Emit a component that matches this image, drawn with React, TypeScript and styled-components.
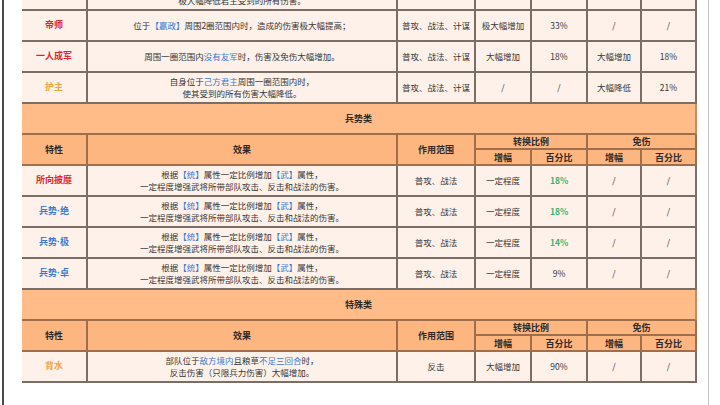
import React from 'react';
import styled, { createGlobalStyle } from 'styled-components';

type Tone = 'red' | 'orange' | 'blue';

const toneColor: Record<Tone, string> = {
  red: '#e0262c',
  orange: '#f3a43e',
  blue: '#3a7ad6',
};

const GlobalStyle = createGlobalStyle`
  html, body {
    margin: 0;
    padding: 0;
    background: #ffffff;
  }

  body {
    font-family: "Noto Sans CJK SC", "Noto Sans", sans-serif;
    color: #363636;
  }
`;

const Screen = styled.div`
  box-sizing: border-box;
  width: 720px;
  height: 405px;
  padding-left: 2px;
  overflow: hidden;
  background: #ffffff;
`;

const Frame = styled.div`
  box-sizing: border-box;
  width: 707px;
  height: 405px;
  padding-left: 18px;
  border-left: 2px solid #4b4b4b;
  border-right: 1px solid #c6c6c6;
  overflow: hidden;
`;

const Table = styled.table`
  width: 675px;
  margin-top: -20px;
  table-layout: fixed;
  border-collapse: separate;
  border-spacing: 0;
`;

const Col = styled.col<{ $w: number }>`
  width: ${(p) => p.$w}px;
`;

const Row = styled.tr<{ $h: number }>`
  height: ${(p) => p.$h}px;
`;

const Cell = styled.td`
  box-sizing: border-box;
  padding: 0 2px;
  background: #fdf1ea;
  border-right: 2px solid #7b6e67;
  border-bottom: 2px solid #7b6e67;
  text-align: center;
  vertical-align: middle;
  font-size: 8.5px;
  line-height: 11.5px;
  white-space: nowrap;
`;

const HeadCell = styled.th`
  box-sizing: border-box;
  padding: 0;
  background: #fdb680;
  border-right: 2px solid #a06e4b;
  border-bottom: 2px solid #a06e4b;
  text-align: center;
  vertical-align: middle;
  font-size: 9px;
  line-height: 11px;
  font-weight: 700;
  color: #2e2a27;
`;

const SectionCell = styled.td`
  box-sizing: border-box;
  background: #ffbc88;
  border-right: 2px solid #c98a5c;
  border-bottom: 2px solid #a06e4b;
  text-align: center;
  vertical-align: middle;
  font-size: 9px;
  font-weight: 700;
  color: #2e2a27;
`;

// Latin font first so the middle dot in 兵势·绝 stays narrow
const Name = styled.span<{ $tone: Tone }>`
  font-family: "Liberation Sans", "Noto Sans CJK SC", sans-serif;
  font-size: 9px;
  font-weight: 700;
  color: ${(p) => toneColor[p.$tone]};
`;

const Mark = styled.span`
  color: #3a7ad6;
`;

const Pct = styled.span<{ $green?: boolean }>`
  color: ${(p) => (p.$green ? '#37b36f' : 'inherit')};
  font-weight: ${(p) => (p.$green ? 700 : 400)};
`;

type Trait = {
  name: string;
  tone: Tone;
  effect: React.ReactNode;
  range: string;
  boost: string;
  pct: string;
  green?: boolean;
  guard: string;
  guardPct: string;
};

const widths = [66, 310, 78, 56, 56, 54, 55];

const troopEffect = (
  <>
    根据<Mark>【统】</Mark>属性一定比例增加<Mark>【武】</Mark>属性，
    <br />
    一定程度增强武将所带部队攻击、反击和战法的伤害。
  </>
);

const lordTraits: Trait[] = [
  {
    name: '忠君',
    tone: 'orange',
    effect: (
      <>
        周围一圈范围内存在己方君主时，
        <br />
        极大幅降低君主受到的所有伤害。
      </>
    ),
    range: '普攻、战法、计谋',
    boost: '/',
    pct: '/',
    guard: '极大幅降低',
    guardPct: '30%',
  },
  {
    name: '帝师',
    tone: 'red',
    effect: (
      <>
        位于<Mark>【嬴政】</Mark>周围2圈范围内时，造成的伤害极大幅提高；
      </>
    ),
    range: '普攻、战法、计谋',
    boost: '极大幅增加',
    pct: '33%',
    guard: '/',
    guardPct: '/',
  },
  {
    name: '一人成军',
    tone: 'red',
    effect: (
      <>
        周围一圈范围内<Mark>没有友军</Mark>时，伤害及免伤大幅增加。
      </>
    ),
    range: '普攻、战法、计谋',
    boost: '大幅增加',
    pct: '18%',
    guard: '大幅增加',
    guardPct: '18%',
  },
  {
    name: '护主',
    tone: 'orange',
    effect: (
      <>
        自身位于<Mark>己方君主</Mark>周围一圈范围内时，
        <br />
        使其受到的所有伤害大幅降低。
      </>
    ),
    range: '普攻、战法、计谋',
    boost: '/',
    pct: '/',
    guard: '大幅降低',
    guardPct: '21%',
  },
];

const troopTraits: Trait[] = [
  { name: '所向披靡', tone: 'red', effect: troopEffect, range: '普攻、战法', boost: '一定程度', pct: '18%', green: true, guard: '/', guardPct: '/' },
  { name: '兵势·绝', tone: 'blue', effect: troopEffect, range: '普攻、战法', boost: '一定程度', pct: '18%', green: true, guard: '/', guardPct: '/' },
  { name: '兵势·极', tone: 'blue', effect: troopEffect, range: '普攻、战法', boost: '一定程度', pct: '14%', green: true, guard: '/', guardPct: '/' },
  { name: '兵势·卓', tone: 'blue', effect: troopEffect, range: '普攻、战法', boost: '一定程度', pct: '9%', guard: '/', guardPct: '/' },
];

const specialTraits: Trait[] = [
  {
    name: '背水',
    tone: 'orange',
    effect: (
      <>
        部队位于<Mark>敌方境内</Mark>且粮草<Mark>不足三回合</Mark>时，
        <br />
        反击伤害（只限兵力伤害）大幅增加。
      </>
    ),
    range: '反击',
    boost: '大幅增加',
    pct: '90%',
    guard: '/',
    guardPct: '/',
  },
];

const TraitRow: React.FC<{ trait: Trait }> = ({ trait }) => (
  <Row $h={31}>
    <Cell>
      <Name $tone={trait.tone}>{trait.name}</Name>
    </Cell>
    <Cell>{trait.effect}</Cell>
    <Cell>{trait.range}</Cell>
    <Cell>{trait.boost}</Cell>
    <Cell>
      <Pct $green={trait.green}>{trait.pct}</Pct>
    </Cell>
    <Cell>{trait.guard}</Cell>
    <Cell>{trait.guardPct}</Cell>
  </Row>
);

const SectionHead: React.FC<{ title: string }> = ({ title }) => (
  <>
    <Row $h={31}>
      <SectionCell colSpan={7}>{title}</SectionCell>
    </Row>
    <Row $h={15}>
      <HeadCell rowSpan={2}>特性</HeadCell>
      <HeadCell rowSpan={2}>效果</HeadCell>
      <HeadCell rowSpan={2}>作用范围</HeadCell>
      <HeadCell colSpan={2}>转换比例</HeadCell>
      <HeadCell colSpan={2}>免伤</HeadCell>
    </Row>
    <Row $h={16}>
      <HeadCell>增幅</HeadCell>
      <HeadCell>百分比</HeadCell>
      <HeadCell>增幅</HeadCell>
      <HeadCell>百分比</HeadCell>
    </Row>
  </>
);

const App: React.FC = () => (
  <Screen>
    <GlobalStyle />
    <Frame>
      <Table>
        <colgroup>
          {widths.map((w, i) => (
            <Col key={i} $w={w} />
          ))}
        </colgroup>
        <tbody>
          {lordTraits.map((t) => (
            <TraitRow key={t.name} trait={t} />
          ))}
          <SectionHead title="兵势类" />
          {troopTraits.map((t) => (
            <TraitRow key={t.name} trait={t} />
          ))}
          <SectionHead title="特殊类" />
          {specialTraits.map((t) => (
            <TraitRow key={t.name} trait={t} />
          ))}
        </tbody>
      </Table>
    </Frame>
  </Screen>
);

export default App;
